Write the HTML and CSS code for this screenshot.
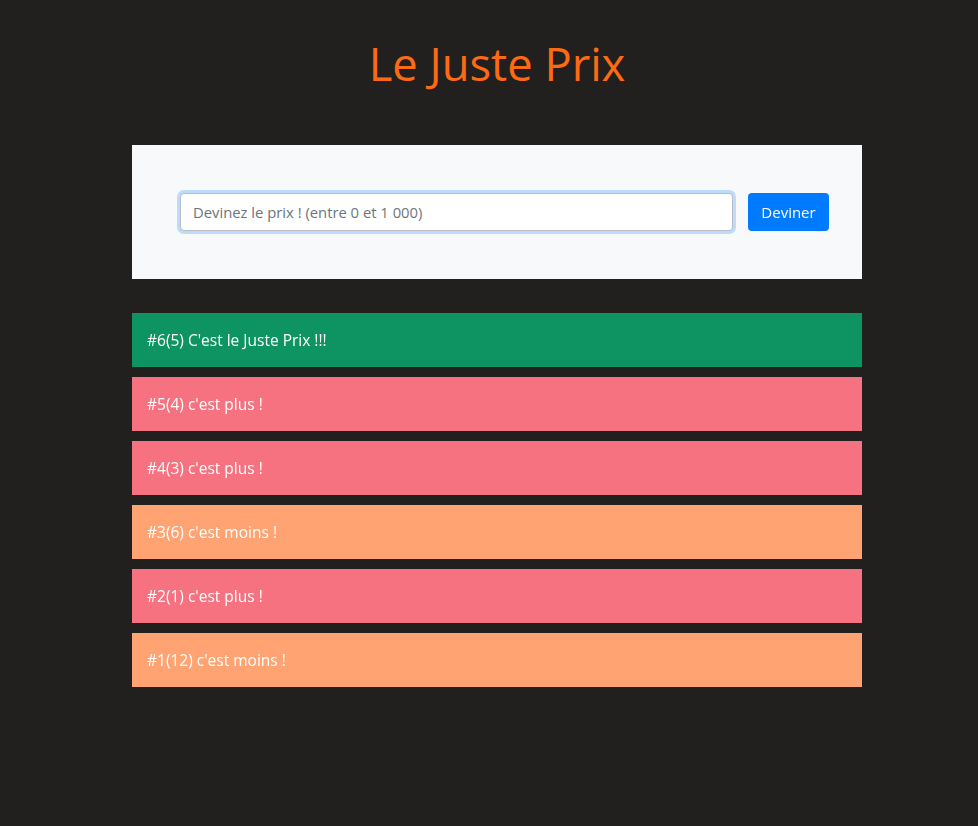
FILE: index.html
```html
<!DOCTYPE html>
<html lang="fr">
<head>
<meta charset="utf-8">
<title>Le Juste Prix</title>
<link rel="stylesheet" href="styles.css">
</head>
<body>
<div class="wrap">
  <h1 class="title">Le Juste Prix</h1>
  <form class="panel" onsubmit="return false">
    <input class="guess" type="text" placeholder="Devinez le prix ! (entre 0 et 1 000)" autofocus>
    <button class="btn" type="submit">Deviner</button>
  </form>
  <ul class="results">
    <li class="row win">#6(5) C'est le Juste Prix !!!</li>
    <li class="row more">#5(4) c'est plus !</li>
    <li class="row more">#4(3) c'est plus !</li>
    <li class="row less">#3(6) c'est moins !</li>
    <li class="row more">#2(1) c'est plus !</li>
    <li class="row less">#1(12) c'est moins !</li>
  </ul>
</div>
</body>
</html>
```
FILE: styles.css
```css
html, body {
  margin: 0;
  padding: 0;
  background: #21201f;
  font-family: "Open Sans", "Noto Sans", sans-serif;
}
.wrap {
  width: 730px;
  margin-left: 132px;
  padding-top: 34px;
}
.title {
  margin: 0 0 52px;
  text-align: center;
  color: #fd6a14;
  font-weight: 400;
  font-size: 45.3px;
  line-height: 59px;
}
.panel {
  background: #f8f9fa;
  height: 134px;
  box-sizing: border-box;
  padding: 0 33px 0 48px;
  display: flex;
  align-items: center;
  gap: 15px;
  margin: 0 0 34px;
}
.guess {
  flex: 1;
  height: 38px;
  box-sizing: border-box;
  border: 1px solid #b9bdc2;
  border-radius: 4px;
  padding: 0 12px;
  font-family: inherit;
  font-size: 14.8px;
  color: #495057;
  background: #fff;
  outline: none;
  box-shadow: 0 0 0 3px rgba(128, 189, 255, 0.5);
}
.guess::placeholder {
  color: #6c757d;
}
.btn {
  height: 38px;
  width: 81px;
  border: none;
  border-radius: 4px;
  background: #007bff;
  color: #fff;
  font-family: inherit;
  font-size: 15px;
  padding: 0;
}
.results {
  list-style: none;
  margin: 0;
  padding: 0;
  display: flex;
  flex-direction: column;
  gap: 10px;
}
.row {
  height: 54px;
  box-sizing: border-box;
  padding: 0 15px;
  display: flex;
  align-items: center;
  color: #fff;
  font-size: 15.5px;
}
.win { background: #0d9462; }
.more { background: #f67280; }
.less { background: #ffa372; }
```
